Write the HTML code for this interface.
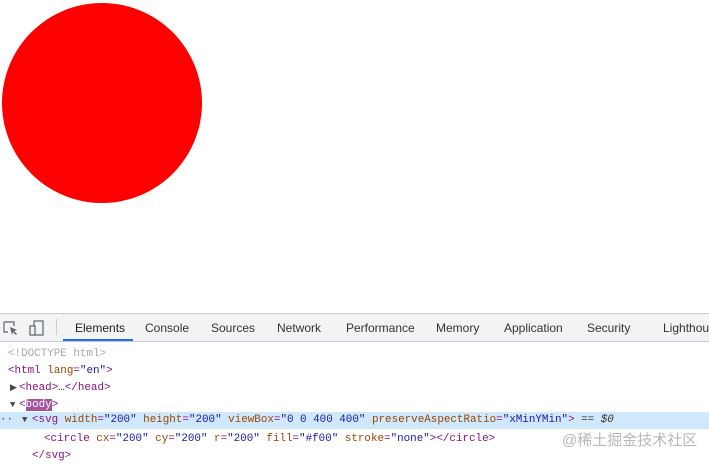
<!DOCTYPE html>
<html><head><style>
body{margin:0;width:709px;height:463px;overflow:hidden;background:#fff;position:relative;font-family:"Liberation Sans",sans-serif}
#dt{position:absolute;left:0;top:313px;width:709px;height:150px;border-top:1px solid #cacdd1}
#bar{height:27px;background:#f1f3f4;border-bottom:1px solid #cacdd1;position:relative;font-size:12px;color:#333}
.t{position:absolute;top:7px;white-space:nowrap}
#ul{position:absolute;left:63px;top:25px;width:70px;height:2px;background:#1a73e8}
.l{position:absolute;left:0;height:17px;line-height:17px;font-family:"Liberation Mono",monospace;font-size:10.9px;white-space:pre;color:#881280;width:709px}
.l span.x{position:absolute;top:0}
.a{color:#994500}.v{color:#1a1aa6}.p{color:#a8a8a8}
.ar{position:absolute;top:0;font-size:9px;color:#444}
</style></head><body>
<svg width="200" height="200" viewBox="0 0 400 400" style="position:absolute;left:2px;top:3px"><circle cx="200" cy="200" r="200" fill="#f00"/></svg>
<div id="dt">
<div id="bar">
<svg style="position:absolute;left:3px;top:7px" width="16" height="16" viewBox="0 0 16 16"><path d="M1 1h10v4M1 1v10h4" fill="none" stroke="#5f6368" stroke-width="1.2"/><path d="M7 6l7 3-3 1 3 3-1 1-3-3-1 3z" fill="#5f6368"/></svg>
<svg style="position:absolute;left:29px;top:6px" width="16" height="16" viewBox="0 0 16 16"><rect x="5" y="1" width="9" height="14" fill="none" stroke="#5f6368" stroke-width="1.2"/><rect x="1" y="6" width="5" height="9" fill="#f1f3f4" stroke="#5f6368" stroke-width="1.2"/></svg>
<div style="position:absolute;left:56px;top:5px;width:1px;height:16px;background:#ccc"></div>
<span class="t" style="left:75px;color:#202124">Elements</span>
<span class="t" style="left:145px">Console</span>
<span class="t" style="left:211px">Sources</span>
<span class="t" style="left:277px">Network</span>
<span class="t" style="left:346px">Performance</span>
<span class="t" style="left:436px">Memory</span>
<span class="t" style="left:504px">Application</span>
<span class="t" style="left:587px">Security</span>
<span class="t" style="left:663px">Lighthouse</span>
<div id="ul"></div>
</div>
<div class="l p" style="top:32px"><span class="x" style="left:8px">&lt;!DOCTYPE html&gt;</span></div>
<div class="l" style="top:49px"><span class="x" style="left:8px">&lt;html <span class="a">lang</span>=<span class="v">"en"</span>&gt;</span></div>
<div class="l" style="top:66px"><span class="ar" style="left:10px">▶</span><span class="x" style="left:19px">&lt;head&gt;<span style="color:#333">…</span>&lt;/head&gt;</span></div>
<div class="l" style="top:83px"><span class="ar" style="left:10px">▼</span><span class="x" style="left:19px">&lt;<span style="background:#a2549e;color:#fff">body</span>&gt;</span></div>
<div class="l" style="top:98px;background:#cfe8fc"><span class="x" style="left:0;color:#555">··</span><span class="ar" style="left:22px">▼</span><span class="x" style="left:32px">&lt;svg <span class="a">width</span>=<span class="v">"200"</span> <span class="a">height</span>=<span class="v">"200"</span> <span class="a">viewBox</span>=<span class="v">"0 0 400 400"</span> <span class="a">preserveAspectRatio</span>=<span class="v">"xMinYMin"</span>&gt; <span style="color:#333">== <i>$0</i></span></span></div>
<div class="l" style="top:117px"><span class="x" style="left:44px">&lt;circle <span class="a">cx</span>=<span class="v">"200"</span> <span class="a">cy</span>=<span class="v">"200"</span> <span class="a">r</span>=<span class="v">"200"</span> <span class="a">fill</span>=<span class="v">"#f00"</span> <span class="a">stroke</span>=<span class="v">"none"</span>&gt;&lt;/circle&gt;</span></div>
<div class="l" style="top:134px"><span class="x" style="left:32px">&lt;/svg&gt;</span></div>
<div style="position:absolute;left:562px;top:115px;font-size:15px;color:#b8b8b8;font-family:'Liberation Sans','Noto Sans CJK SC',sans-serif">@稀土掘金技术社区</div>
</div>
</body></html>
